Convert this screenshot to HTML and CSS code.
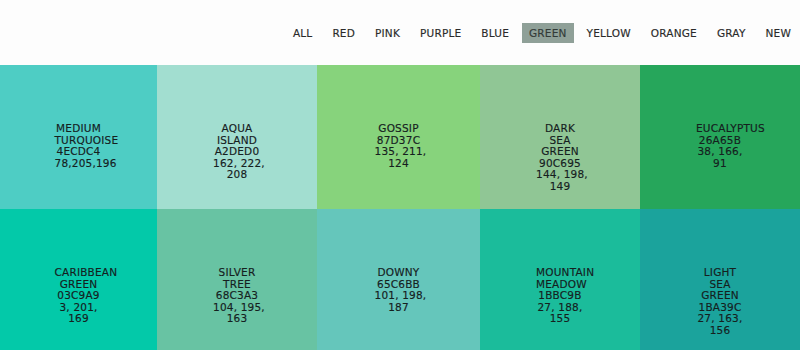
FILE: index.html
```html
<!DOCTYPE html>
<html>
<head>
<meta charset="utf-8">
<link rel="stylesheet" href="styles.css">
</head>
<body>
<header class="top">
  <nav class="nav">
    <a class="nav-item">ALL</a>
    <a class="nav-item">RED</a>
    <a class="nav-item">PINK</a>
    <a class="nav-item">PURPLE</a>
    <a class="nav-item">BLUE</a>
    <a class="nav-item active">GREEN</a>
    <a class="nav-item">YELLOW</a>
    <a class="nav-item">ORANGE</a>
    <a class="nav-item">GRAY</a>
    <a class="nav-item">NEW</a>
  </nav>
</header>
<main class="grid">
  <div class="tile" style="background:#4ECDC4"><div class="label"><div>MEDIUM</div><div>TURQUOISE</div><div>4ECDC4</div><div>78,205,196</div></div></div>
  <div class="tile" style="background:#A2DED0"><div class="label"><div>AQUA</div><div>ISLAND</div><div>A2DED0</div><div>162, 222,</div><div>208</div></div></div>
  <div class="tile" style="background:#87D37C"><div class="label"><div>GOSSIP</div><div>87D37C</div><div>135, 211,</div><div>124</div></div></div>
  <div class="tile" style="background:#90C695"><div class="label"><div>DARK</div><div>SEA</div><div>GREEN</div><div>90C695</div><div>144, 198,</div><div>149</div></div></div>
  <div class="tile" style="background:#26A65B"><div class="label"><div>EUCALYPTUS</div><div>26A65B</div><div>38, 166,</div><div>91</div></div></div>
  <div class="tile" style="background:#03C9A9"><div class="label"><div>CARIBBEAN</div><div>GREEN</div><div>03C9A9</div><div>3, 201,</div><div>169</div></div></div>
  <div class="tile" style="background:#68C3A3"><div class="label"><div>SILVER</div><div>TREE</div><div>68C3A3</div><div>104, 195,</div><div>163</div></div></div>
  <div class="tile" style="background:#65C6BB"><div class="label"><div>DOWNY</div><div>65C6BB</div><div>101, 198,</div><div>187</div></div></div>
  <div class="tile" style="background:#1BBC9B"><div class="label"><div>MOUNTAIN</div><div>MEADOW</div><div>1BBC9B</div><div>27, 188,</div><div>155</div></div></div>
  <div class="tile" style="background:#1BA39C"><div class="label"><div>LIGHT</div><div>SEA</div><div>GREEN</div><div>1BA39C</div><div>27, 163,</div><div>156</div></div></div>
</main>
</body>
</html>
```
FILE: styles.css
```css
html, body {
  margin: 0;
  padding: 0;
  background: #fdfdfd;
  font-family: "DejaVu Sans", "Liberation Sans", sans-serif;
  overflow: hidden;
}
.top {
  height: 65px;
  background: #fdfdfd;
  display: flex;
  justify-content: flex-end;
  align-items: flex-start;
}
.nav {
  display: flex;
  gap: 6px;
  margin-top: 23px;
  padding-right: 2px;
}
.nav-item {
  display: block;
  height: 20px;
  line-height: 20px;
  padding: 0 7px;
  font-size: 10.5px;
  color: #2a2a2a;
  letter-spacing: 0.2px;
  -webkit-text-stroke: 0.15px currentColor;
}
.nav-item.active {
  background: #8fa098;
  color: #333b38;
}
.grid {
  display: grid;
  grid-template-columns: 157px 160px 163px 160px 160px;
  grid-auto-rows: 144px;
}
.tile {
  display: flex;
  justify-content: center;
  padding-top: 58px;
  box-sizing: border-box;
}
.label {
  width: 48px;
  font-size: 10.5px;
  line-height: 11.5px;
  letter-spacing: 0.2px;
  color: #15201e;
  text-align: center;
  -webkit-text-stroke: 0.15px currentColor;
}
.label div {
  white-space: nowrap;
}
```
